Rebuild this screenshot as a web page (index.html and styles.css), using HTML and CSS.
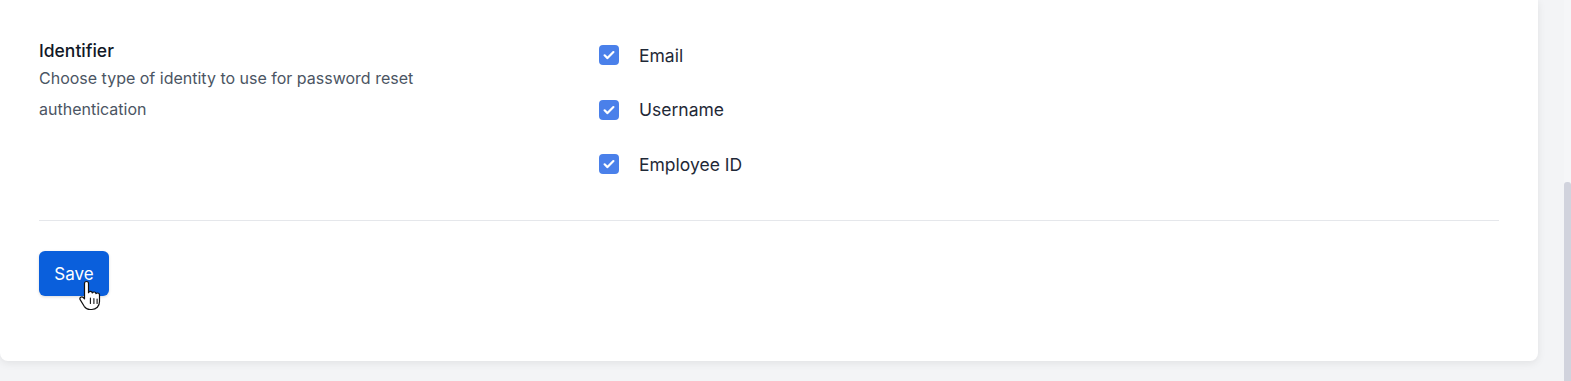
FILE: index.html
```html
<!DOCTYPE html>
<html>
<head>
<meta charset="utf-8">
<link rel="stylesheet" href="styles.css">
</head>
<body>
<div class="page">
  <main class="main">
    <section class="card">
      <div class="field">
        <div class="field-info">
          <h3 class="field-title">Identifier</h3>
          <p class="field-desc">Choose type of identity to use for password reset authentication</p>
        </div>
        <div class="options">
          <label class="option"><span class="check"><svg viewBox="0 0 20 20" width="20" height="20"><path d="M5.6 10.3l2.9 2.8 5.9-6" fill="none" stroke="#fff" stroke-width="2.2" stroke-linecap="round" stroke-linejoin="round"/></svg></span>Email</label>
          <label class="option"><span class="check"><svg viewBox="0 0 20 20" width="20" height="20"><path d="M5.6 10.3l2.9 2.8 5.9-6" fill="none" stroke="#fff" stroke-width="2.2" stroke-linecap="round" stroke-linejoin="round"/></svg></span>Username</label>
          <label class="option"><span class="check"><svg viewBox="0 0 20 20" width="20" height="20"><path d="M5.6 10.3l2.9 2.8 5.9-6" fill="none" stroke="#fff" stroke-width="2.2" stroke-linecap="round" stroke-linejoin="round"/></svg></span>Employee ID</label>
        </div>
      </div>
      <div class="divider"></div>
      <div class="actions">
        <button class="btn-save">Save
          <svg class="cursor" viewBox="0 0 22 31" width="22" height="31">
            <path d="M7.5 1.5c1.1 0 2 .9 2 2v9.2c.3-.8 1-1.3 1.9-1.3 1 0 1.8.7 1.9 1.6.3-.6 1-1 1.8-1 1 0 1.8.7 1.9 1.6.4-.4.9-.6 1.5-.6 1.1 0 2 .9 2 2v6.5c0 4.6-3.2 8-7.7 8h-1.8c-2.6 0-4.400-1.2-5.8-3.2L1.3 19.9c-.6-.9-.4-2 .4-2.6.8-.6 1.9-.5 2.6.2l1.2 1.4V3.5c0-1.1.9-2 2-2z" fill="#fff" stroke="#111" stroke-width="1.2" stroke-linejoin="round"/>
            <path d="M11.4 18v5.5M14.9 18.5v5M18.1 19v4.5" stroke="#111" stroke-width="1.1" stroke-linecap="round"/>
          </svg>
        </button>
      </div>
    </section>
  </main>
  <div class="scrollbar"><div class="thumb"></div></div>
</div>
</body>
</html>
```
FILE: styles.css
```css
* { box-sizing: border-box; }
html, body { margin: 0; padding: 0; }
body {
  background: #f3f4f6;
  font-family: Inter, "Noto Sans", sans-serif;
  height: 381px;
  overflow: hidden;
}
.page {
  display: flex;
  height: 381px;
}
.main {
  flex: 1;
  padding-right: 26px;
}
.card {
  background: #fff;
  border-radius: 0 0 8px 8px;
  box-shadow: 0 2px 8px rgba(0, 0, 0, 0.08);
  padding: 39px 39px 65px 39px;
}
.field {
  display: flex;
  height: 181px;
}
.field-info {
  width: 560px;
}
.field-title {
  margin: 0;
  font-size: 17.5px;
  font-weight: 500;
  color: #111827;
  line-height: 24px;
}
.field-desc {
  margin: 0;
  width: 420px;
  font-size: 16px;
  line-height: 31px;
  color: #4b5563;
}
.options {
  display: flex;
  flex-direction: column;
  gap: 34.5px;
  padding-top: 6px;
}
.option {
  display: flex;
  align-items: center;
  height: 20px;
  font-size: 17.5px;
  color: #1f2937;
}
.check {
  width: 20px;
  height: 20px;
  border-radius: 4px;
  background: #4a80ea;
  margin-right: 20px;
  display: flex;
}
.divider {
  height: 1px;
  background: #e5e7eb;
}
.actions {
  padding-top: 30px;
}
.btn-save {
  position: relative;
  width: 70px;
  height: 45px;
  border: 0;
  border-radius: 6px;
  background: #0a5fdc;
  color: #fff;
  font-family: Inter, "Noto Sans", sans-serif;
  font-size: 17px;
  box-shadow: 0 1px 3px rgba(0, 0, 0, 0.15);
  padding: 0;
}
.cursor {
  position: absolute;
  left: 40px;
  top: 29px;
}
.scrollbar {
  width: 7px;
  background: #f5f6f8;
  padding-top: 182px;
}
.thumb {
  height: 199px;
  background: #d1d3dd;
  border-radius: 3px 3px 0 0;
}
```
